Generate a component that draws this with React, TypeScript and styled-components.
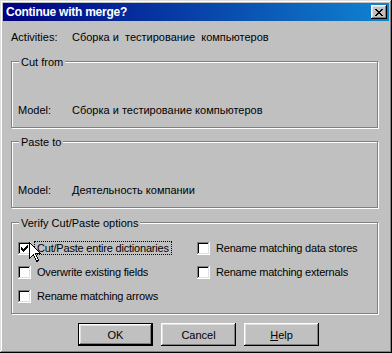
import React from 'react';
import styled, { createGlobalStyle } from 'styled-components';

const GlobalStyle = createGlobalStyle`
  html, body { margin: 0; padding: 0; background: #c0c0c0; }
  body { font-family: "Liberation Sans", Arial, sans-serif; font-size: 11px; }
`;

const Window = styled.div`
  box-sizing: border-box;
  width: 392px;
  height: 353px;
  padding: 3px;
  background: #c0c0c0;
  box-shadow: inset -1px -1px #000, inset 1px 1px #dfdfdf, inset -2px -2px #808080, inset 2px 2px #fff;
  display: flex;
  flex-direction: column;
  font-family: "Liberation Sans", Arial, sans-serif;
  font-size: 11px;
  color: #000;
`;

const TitleBar = styled.div`
  height: 18px;
  display: flex;
  align-items: center;
  justify-content: space-between;
  padding: 0 2px 0 3px;
  background: linear-gradient(90deg, #000080, #1084d0);
`;

const Title = styled.span`
  color: #fff;
  font-weight: bold;
  font-size: 12px;
  letter-spacing: -0.25px;
  line-height: 14px;
`;

const CloseButton = styled.button`
  width: 16px;
  height: 14px;
  padding: 1px 0 0 0;
  border: none;
  background: #c0c0c0;
  box-shadow: inset -1px -1px #000, inset 1px 1px #fff, inset -2px -2px #808080, inset 2px 2px #dfdfdf;
  display: flex;
  align-items: center;
  justify-content: center;
  svg { display: block; }
`;

const Body = styled.div`
  display: flex;
  flex-direction: column;
  padding: 10px 11px 0 8px;
`;

const InfoRow = styled.div<{ $labelWidth: number }>`
  display: grid;
  grid-template-columns: ${p => p.$labelWidth}px 1fr;
  line-height: 13px;
  height: 13px;
  white-space: pre;
`;

const Group = styled.div<{ $top: number; $pad: string }>`
  position: relative;
  margin-top: ${p => p.$top}px;
  border: 1px solid #808080;
  box-shadow: inset 1px 1px #fff, 1px 1px #fff;
  padding: ${p => p.$pad};
`;

const Legend = styled.span`
  position: absolute;
  top: -6px;
  left: 7px;
  padding: 0 2px;
  line-height: 13px;
  background: #c0c0c0;
`;

const OptionsGrid = styled.div`
  display: grid;
  grid-template-columns: 179px 1fr;
  row-gap: 10px;
`;

const CheckRow = styled.div`
  display: flex;
  align-items: flex-end;
  height: 14px;
`;

const Box = styled.span`
  box-sizing: border-box;
  width: 13px;
  height: 13px;
  flex: none;
  background: #fff;
  box-shadow: inset -1px -1px #fff, inset 1px 1px #808080, inset -2px -2px #dfdfdf, inset 2px 2px #000;
  display: flex;
  align-items: center;
  justify-content: center;
  svg { display: block; }
`;

const CheckLabel = styled.span<{ $focused?: boolean }>`
  margin-left: 3px;
  padding: 0 2px;
  line-height: 12px;
  letter-spacing: -0.2px;
  border: 1px dotted ${p => (p.$focused ? '#000' : 'transparent')};
  white-space: nowrap;
`;

const Cursor = styled.svg`
  position: absolute;
  left: 17px;
  top: 19px;
  display: block;
`;

const ButtonRow = styled.div`
  display: flex;
  gap: 8px;
  margin-top: 9px;
  padding-left: 67px;
`;

const Button = styled.button<{ $default?: boolean }>`
  box-sizing: border-box;
  width: 75px;
  height: 23px;
  padding: 0;
  border: none;
  background: #c0c0c0;
  font-family: "Liberation Sans", Arial, sans-serif;
  font-size: 11px;
  color: #000;
  box-shadow: ${p =>
    p.$default
      ? 'inset -2px -2px #000, inset 1px 1px #000, inset 2px 2px #fff, inset -3px -3px #808080, inset 3px 3px #dfdfdf'
      : 'inset -1px -1px #000, inset 1px 1px #fff, inset -2px -2px #808080, inset 2px 2px #dfdfdf'};
`;

const CloseGlyph = () => (
  <svg width="8" height="7" viewBox="0 0 8 7" shapeRendering="crispEdges">
    <path
      fill="#000"
      d="M0 0h2v1H0z M6 0h2v1H6z M1 1h2v1H1z M5 1h2v1H5z M2 2h4v1H2z M3 3h2v1H3z M2 4h4v1H2z M1 5h2v1H1z M5 5h2v1H5z M0 6h2v1H0z M6 6h2v1H6z"
    />
  </svg>
);

const CheckGlyph = () => (
  <svg width="7" height="7" viewBox="0 0 7 7" shapeRendering="crispEdges">
    <path
      fill="#000"
      d="M0 2h1v3H0z M1 3h1v3H1z M2 4h1v3H2z M3 3h1v3H3z M4 2h1v3H4z M5 1h1v3H5z M6 0h1v3H6z"
    />
  </svg>
);

type Opt = { label: string; checked?: boolean; focused?: boolean };

const Check = ({ label, checked, focused }: Opt) => (
  <CheckRow>
    <Box>{checked ? <CheckGlyph /> : null}</Box>
    <CheckLabel $focused={focused}>{label}</CheckLabel>
  </CheckRow>
);

export default function App() {
  const options: (Opt | null)[] = [
    { label: 'Cut/Paste entire dictionaries', checked: true, focused: true },
    { label: 'Rename matching data stores' },
    { label: 'Overwrite existing fields' },
    { label: 'Rename matching externals' },
    { label: 'Rename matching arrows' },
    null,
  ];
  return (
    <>
      <GlobalStyle />
      <Window>
        <TitleBar>
          <Title>Continue with merge?</Title>
          <CloseButton aria-label="Close">
            <CloseGlyph />
          </CloseButton>
        </TitleBar>
        <Body>
          <InfoRow $labelWidth={61}>
            <span>Activities:</span>
            <span>{'Сборка и  тестирование  компьютеров'}</span>
          </InfoRow>

          <Group $top={17} $pad="42px 6px 10px 6px">
            <Legend>Cut from</Legend>
            <InfoRow $labelWidth={54}>
              <span>Model:</span>
              <span>Сборка и тестирование компьютеров</span>
            </InfoRow>
          </Group>

          <Group $top={13} $pad="42px 6px 10px 6px">
            <Legend>Paste to</Legend>
            <InfoRow $labelWidth={54}>
              <span>Model:</span>
              <span>Деятельность компании</span>
            </InfoRow>
          </Group>

          <Group $top={14} $pad="18px 6px 10px 6px">
            <Legend>Verify Cut/Paste options</Legend>
            <OptionsGrid>
              {options.map((o, i) => (o ? <Check key={i} {...o} /> : <span key={i} />))}
            </OptionsGrid>
            <Cursor width="13" height="21" viewBox="0 0 13 21">
              <path
                d="M0.5 0.5 L0.5 16.5 L4.5 12.5 L7.5 19.5 L9.5 18.5 L6.5 11.5 L11.5 11.5 Z"
                fill="#fff"
                stroke="#000"
                strokeWidth="1"
                shapeRendering="crispEdges"
              />
            </Cursor>
          </Group>

          <ButtonRow>
            <Button $default>OK</Button>
            <Button>Cancel</Button>
            <Button>
              <u>H</u>elp
            </Button>
          </ButtonRow>
        </Body>
      </Window>
    </>
  );
}
